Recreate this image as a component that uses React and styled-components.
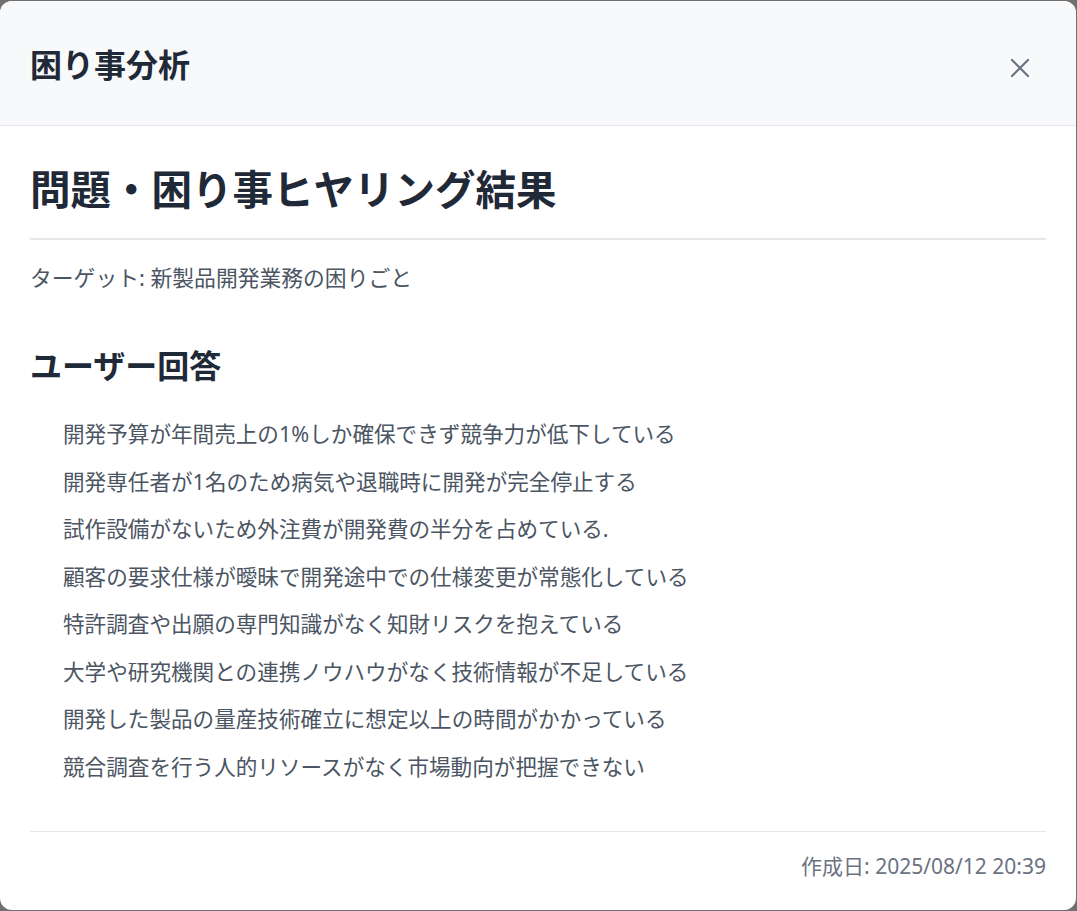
import React from 'react'
import styled, { createGlobalStyle } from 'styled-components'

const GlobalStyle = createGlobalStyle`
  html, body {
    margin: 0;
    padding: 0;
    background: #707070;
    font-family: "Noto Sans", "Noto Sans CJK JP", sans-serif;
  }
  * { box-sizing: border-box; }
`

const answers = [
  '開発予算が年間売上の1%しか確保できず競争力が低下している',
  '開発専任者が1名のため病気や退職時に開発が完全停止する',
  '試作設備がないため外注費が開発費の半分を占めている.',
  '顧客の要求仕様が曖昧で開発途中での仕様変更が常態化している',
  '特許調査や出願の専門知識がなく知財リスクを抱えている',
  '大学や研究機関との連携ノウハウがなく技術情報が不足している',
  '開発した製品の量産技術確立に想定以上の時間がかかっている',
  '競合調査を行う人的リソースがなく市場動向が把握できない',
]

const App = () => {
  return (
    <>
      <GlobalStyle />
      <Modal>
        {/* header with close button */}
        <Header>
          <HeaderTitle>困り事分析</HeaderTitle>
          <CloseButton aria-label='close'>
            <svg width='20' height='20' viewBox='0 0 20 20'>
              <path d='M2 2 L18 18 M18 2 L2 18' stroke='#6b7280' strokeWidth='2.2' strokeLinecap='round' />
            </svg>
          </CloseButton>
        </Header>

        <Body>
          <Title>問題・困り事ヒヤリング結果</Title>
          <Target>ターゲット: 新製品開発業務の困りごと</Target>

          <SectionTitle>ユーザー回答</SectionTitle>
          <AnswerList>
            {answers.map((a) => (
              <Answer key={a}>{a}</Answer>
            ))}
          </AnswerList>

          <Footer>作成日: 2025/08/12 20:39</Footer>
        </Body>
      </Modal>
    </>
  )
}

const Modal = styled.div`
  margin-top: 1px;
  width: 1076px;
  height: 909px;
  background: #fff;
  border-radius: 12px;
  overflow: hidden;
  display: flex;
  flex-direction: column;
`

const Header = styled.header`
  height: 125px;
  flex-shrink: 0;
  background: #f8f9fb;
  border-bottom: 1px solid #e5e7eb;
  display: flex;
  align-items: center;
  justify-content: space-between;
  padding: 0 38px 0 30px;
`

const HeaderTitle = styled.h2`
  margin: 0;
  font-size: 32px;
  font-weight: 700;
  color: #1f2937;
  line-height: 1.3;
  padding-top: 4px;
`

const CloseButton = styled.button`
  border: none;
  background: transparent;
  padding: 8px;
  margin-top: 9px;
  display: flex;
  align-items: center;
  justify-content: center;
  cursor: pointer;
`

const Body = styled.div`
  padding: 40px 30px 0 30px;
  display: flex;
  flex-direction: column;
`

const Title = styled.h1`
  margin: 0;
  font-size: 40.5px;
  font-weight: 700;
  line-height: 48px;
  color: #1f2937;
  padding-bottom: 24px;
  border-bottom: 2px solid #e5e7eb;
`

const Target = styled.p`
  margin: 21px 0 0 0;
  font-size: 21.8px;
  line-height: 34px;
  color: #4b5563;
`

const SectionTitle = styled.h2`
  margin: 50px 0 0 0;
  font-size: 32px;
  font-weight: 700;
  line-height: 42px;
  color: #1f2937;
`

const AnswerList = styled.ul`
  list-style: none;
  margin: 30px 0 0 0;
  padding: 0 0 47px 33px;
  display: flex;
  flex-direction: column;
  gap: 13px;
  border-bottom: 1px solid #e5e7eb;
`

const Answer = styled.li`
  font-size: 21.6px;
  line-height: 34.5px;
  color: #4b5563;
`

const Footer = styled.div`
  padding-top: 19px;
  text-align: right;
  font-size: 21px;
  line-height: 30px;
  color: #6b7280;
`

export default App
